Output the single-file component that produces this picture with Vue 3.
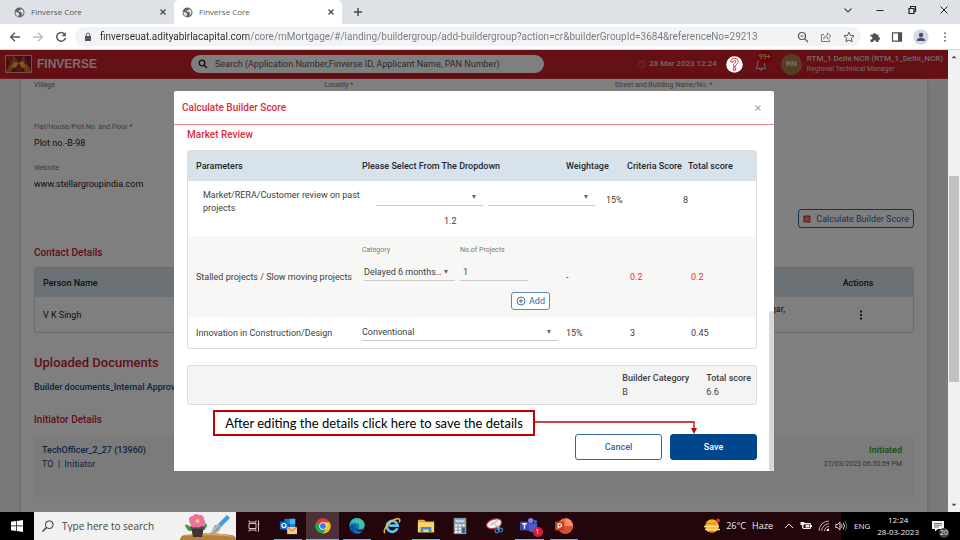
<script setup>
import { ref } from 'vue'

const tabs = [
  { id: 1, title: 'Finverse Core', active: false },
  { id: 2, title: 'Finverse Core', active: true },
]
const url = ref('finverseuat.adityabirlacapital.com/core/mMortgage/#/landing/buildergroup/add-buildergroup?action=cr&builderGroupId=3684&referenceNo=29213')
const search = ref('')
const reviewType = ref('')
const reviewValue = ref('')
const stalledCategory = ref('Delayed 6 months…')
const projectCount = ref('1')
const innovation = ref('Conventional')
const taskQuery = ref('')
</script>

<template>
  <div class="desktop">
    <header class="browser">
      <div class="tabs">
        <div v-for="t in tabs" :key="t.id" class="tab" :class="{ active: t.active }">
          <svg class="globe" viewBox="0 0 12 12"><circle cx="6" cy="6" r="5.4" fill="#5f6368" /><path d="M1.600 5.300 4.600 6.300 5.800 7.600 5 8.800V10.600C2.800 10.200 1.400 8.200 1.600 5.300zM7.500 1.800 7.200 3.200 5.200 3.700 5 5.200 7.600 5.300 8.700 6.800 8.300 9.500C10.400 8 11 5.600 9.800 3.500z" fill="#e4e6ea" /></svg>
          <span class="tab-title">{{ t.title }}</span>
          <button class="plain" aria-label="Close tab"><svg class="x8" viewBox="0 0 8 8"><path d="M1.500 1.500l5 5M6.500 1.500l-5 5" stroke="#45494d" stroke-width="1.300" /></svg></button>
        </div>
        <button class="plain new-tab" aria-label="New tab"><svg class="x10" viewBox="0 0 10 10"><path d="M5 1v8M1 5h8" stroke="#45494d" stroke-width="1.400" /></svg></button>
        <div class="win">
          <button class="plain" aria-label="Search tabs"><svg class="x10" viewBox="0 0 10 10"><path d="M1.500 3.500 5 7l3.500-3.500" fill="none" stroke="#44484c" stroke-width="1.100" /></svg></button>
          <button class="plain" aria-label="Minimize"><svg class="x10" viewBox="0 0 10 10"><path d="M1.500 5.500h7" stroke="#222" stroke-width="1" /></svg></button>
          <button class="plain" aria-label="Restore"><svg class="x10" viewBox="0 0 10 10"><path d="M2 3.500h5v5H2zM3.500 3.500v-2h5v5H7" fill="none" stroke="#222" stroke-width="1.200" /></svg></button>
          <button class="plain" aria-label="Close"><svg class="x10" viewBox="0 0 10 10"><path d="M1.500 1.500l7 7M8.500 1.500l-7 7" stroke="#222" stroke-width="1" /></svg></button>
        </div>
      </div>
      <div class="toolbar">
        <button class="plain" aria-label="Back"><svg class="x12" viewBox="0 0 12 12"><path d="M11 6H2M6 1.700 1.700 6 6 10.300" fill="none" stroke="#54585c" stroke-width="1.400" /></svg></button>
        <button class="plain" aria-label="Forward"><svg class="x12" viewBox="0 0 12 12"><path d="M1 6h9M6 1.700 10.300 6 6 10.300" fill="none" stroke="#b9bbbe" stroke-width="1.400" /></svg></button>
        <button class="plain" aria-label="Reload"><svg class="x12" viewBox="0 0 12 12"><path d="M9.800 3.300A4.400 4.400 0 1 0 10.400 7" fill="none" stroke="#54585c" stroke-width="1.500" /><path d="M10.900.9v4.300H6.600z" fill="#54585c" /></svg></button>
        <div class="omnibox">
          <svg class="lock" viewBox="0 0 8 10"><path d="M1 4h6v5H1z" fill="#54585c" /><path d="M2.300 4V2.700a1.700 1.700 0 0 1 3.400 0V4" fill="none" stroke="#54585c" stroke-width="1" /></svg>
          <input v-model="url" class="url" aria-label="Address" />
          <button class="plain" aria-label="Zoom"><svg class="x12" viewBox="0 0 12 12"><circle cx="5" cy="5" r="3.500" fill="none" stroke="#54585c" stroke-width="1.200" /><path d="M3.500 5h3M7.700 7.700l3.300 3.300" stroke="#54585c" stroke-width="1.200" /></svg></button>
          <button class="plain" aria-label="Share"><svg class="x12" viewBox="0 0 12 12"><path d="M4 3.500H1.500v7h8V8.500" fill="none" stroke="#777b80" /><path d="M3.500 8C4 5.500 5.500 4.300 7.500 4.200V2l3.500 3-3.500 3V6.200C6 6.200 4.700 6.700 3.500 8z" fill="none" stroke="#777b80" stroke-width=".9" /></svg></button>
          <button class="plain" aria-label="Bookmark"><svg class="x12" viewBox="0 0 12 12"><path d="M6 1.200l1.500 3.200 3.500.4-2.600 2.400.7 3.500L6 9l-3.100 1.700.7-3.500L1 4.800l3.500-.4z" fill="none" stroke="#54585c" stroke-width="1" /></svg></button>
        </div>
        <div class="tools">
          <button class="plain" aria-label="Extensions"><svg class="x12" viewBox="0 0 12 12"><path d="M1.500 3.500H4a1.500 1.500 0 1 1 3 0h2.500V6a1.500 1.500 0 1 1 0 3v2H7a1.400 1.400 0 1 0-2.700 0H1.500V8.300a1.400 1.400 0 1 0 0-2.600z" fill="#4c5156" /></svg></button>
          <button class="plain" aria-label="Side panel"><svg class="x12" viewBox="0 0 12 12"><path d="M1.500 1.800h9v8.400h-9z" fill="none" stroke="#4c5156" stroke-width="1.200" /><path d="M7 1.800h3.500v8.400H7z" fill="#4c5156" /></svg></button>
          <button class="plain" aria-label="Profile"><svg class="x16" viewBox="0 0 16 16"><circle cx="8" cy="8" r="7.700" fill="#d5dae2" /><circle cx="8" cy="6" r="2.200" fill="#44546a" /><path d="M3.700 12c0-2.500 2-3.300 4.300-3.300s4.300.8 4.300 3.300z" fill="#44546a" /></svg></button>
          <button class="plain" aria-label="Menu"><svg class="x12" viewBox="0 0 12 12"><path d="M5.200 1.500h1.600v1.600H5.200zM5.200 5.200h1.600v1.600H5.200zM5.200 8.900h1.600v1.600H5.200z" fill="#54585c" /></svg></button>
        </div>
      </div>
    </header>

    <div class="stage">
      <div class="page">
        <div class="appbar">
          <svg class="logo" viewBox="0 0 27 18"><path d="M0 0h27v18H0z" fill="#8e1c24" /><path d="M0 0h9L5 9z" fill="#a83028" /><path d="M27 0h-8l3 9z" fill="#7c1622" /><path d="M9 0 14 8 5 9z" fill="#c8502c" /><path d="M19 0 14 8 22 9z" fill="#c04430" /><path d="M0 18 5 9 9 10 6 18z" fill="#c8642c" /><path d="M27 18 22 9 18 10 20 18z" fill="#d8702c" /><path d="M14 8l5 5-5 5-5-5z" fill="#a82c28" /><path d="M14 8 18 6 21 12 17 13zM9 7l5 1-4 5-4-1z" fill="#f0b848" /><path d="M.5.5h26v17H.5z" fill="none" stroke="#d8a890" /></svg>
          <span class="brand">FINVERSE</span>
          <div class="search">
            <svg class="x10" viewBox="0 0 10 10"><circle cx="4" cy="4" r="2.800" fill="none" stroke="#222" stroke-width="1.300" /><path d="M6 6l3 3" stroke="#222" stroke-width="1.500" /></svg>
            <input v-model="search" aria-label="Search" placeholder="Search (Application Number,Finverse ID, Applicant Name, PAN Number)" />
          </div>
          <div class="bar-right">
            <svg class="cal" viewBox="0 0 8 8"><path d="M1 1.500h6v5.800H1zM1 3h6M2.500.5v1M5.500.5v1" fill="none" stroke="#ee6060" stroke-width=".7" /></svg>
            <span class="stamp">28 Mar 2023 12:24</span>
          </div>
          <div class="help-space"></div>
          <button class="plain bell" aria-label="Notifications">
            <svg class="bell-icon" viewBox="0 0 14 16"><path d="M1 12.500h12c-2-1.500-1.800-3.500-2-6C10.800 4 9.500 2.500 7 2.500S3.200 4 3 6.500c-.2 2.500 0 4.500-2 6zM5 13c.4 2 3.600 2 4 0M7 2.500V1" fill="none" stroke="#f0d8d8" stroke-width="1.100" /></svg>
            <span class="count">99+</span>
          </button>
          <span class="avatar">RN</span>
          <div class="user"><b>RTM_1 Delhi NCR (RTM_1_Delhi_NCR)</b><span>Regional Technical Manager</span></div>
        </div>

        <main class="sheet">
          <div class="facts">
            <span class="label">Village</span>
            <span class="label">Locality *</span>
            <span class="label">Street and Building Name/No. *</span>
          </div>
          <div class="fact"><span class="label">Flat/House/Plot No. and Floor <i>*</i></span><span class="value">Plot no.-B-98</span></div>
          <div class="fact"><span class="label">Website</span><span class="value">www.stellargroupindia.com</span></div>
          <div class="calc-row">
            <button class="calc"><svg class="x8" viewBox="0 0 8 8"><rect x=".5" y=".5" width="7" height="7" rx="1" fill="#d8232f" /><path d="M4 1v6M1 4h6M1.800 2.500h1.500M5 2.500h1.500M5 5.500h1.500M2.500 5v1.500" stroke="#fff" stroke-width=".6" /></svg>Calculate Builder Score</button>
          </div>
          <h2>Contact Details</h2>
          <table class="contacts">
            <thead><tr><th>Person Name</th><th></th><th class="act">Actions</th></tr></thead>
            <tbody><tr><td>V K Singh</td><td class="addr">Nagar,</td><td class="act"><button class="plain" aria-label="Row actions"><svg class="x12" viewBox="0 0 12 12"><path d="M5 1.500h2v2H5zM5 5h2v2H5zM5 8.500h2v2H5z" fill="#0a3c78" /></svg></button></td></tr></tbody>
          </table>
          <h1>Uploaded Documents</h1>
          <a class="doc" href="#documents">Builder documents_Internal Approval</a>
          <h2 class="initiator-title">Initiator Details</h2>
          <section class="initiator">
            <div class="who"><b>TechOfficer_2_27 (13960)</b><span>TO &nbsp;|&nbsp; Initiator</span></div>
            <div class="when"><b>Initiated</b><span>27/03/2023 06:30:59 PM</span></div>
          </section>
        </main>

        <div class="overlay"></div>
        <button class="plain help" aria-label="Help"><svg viewBox="0 0 17 17"><circle cx="8.500" cy="8.500" r="8.300" fill="#fff" /><path d="M4.800 6C4.800 3.600 6.400 2.300 8.500 2.300s3.700 1.300 3.700 3.400c0 1.600-1 2.300-1.900 2.900-.7.500-.7.900-.7 1.700H7.400c0-1.700.3-2.400 1.300-3.100.8-.5 1.100-.8 1.100-1.500s-.5-1.200-1.300-1.200S7.100 5.100 7.100 6zM7.300 11.800h2.400v2.400H7.300z" fill="none" stroke="#d8232f" stroke-width=".9" /></svg></button>

        <div class="modal" role="dialog" aria-labelledby="score-title">
          <div class="modal-head">
            <h3 id="score-title">Calculate Builder Score</h3>
            <button class="plain" aria-label="Close dialog"><svg class="x8" viewBox="0 0 8 8"><path d="M1.500 1.500l5 5M6.500 1.500l-5 5" stroke="#aaa" stroke-width="1.100" /></svg></button>
          </div>
          <div class="modal-body">
            <h3>Market Review</h3>
            <div class="frame">
              <table class="score">
                <colgroup><col class="c1" /><col class="c2" /><col class="c3" /><col class="c3" /><col /></colgroup>
                <thead>
                  <tr><th>Parameters</th><th>Please Select From The Dropdown</th><th>Weightage</th><th>Criteria Score</th><th>Total score</th></tr>
                </thead>
                <tbody>
                  <tr class="review">
                    <td class="inset">Market/RERA/Customer review on past<br />projects</td>
                    <td colspan="4" class="review-cell">
                      <div class="review-line">
                        <div class="pick"><select v-model="reviewType" aria-label="Review type"><option value=""></option></select></div>
                        <div class="pick"><select v-model="reviewValue" aria-label="Review value"><option value=""></option></select></div>
                        <span class="pct">15%</span><span>8</span>
                      </div>
                      <div class="review-score">1.2</div>
                    </td>
                  </tr>
                  <tr class="stalled">
                    <td>Stalled projects / Slow moving projects</td>
                    <td>
                      <div class="pair">
                        <div class="field"><label for="category">Category</label><div class="pick"><select id="category" v-model="stalledCategory"><option>Delayed 6 months…</option></select></div></div>
                        <div class="field count-field"><label for="projects">No.of Projects</label><input id="projects" v-model="projectCount" /></div>
                      </div>
                      <div class="add-row"><button class="add"><svg class="x10" viewBox="0 0 10 10"><circle cx="5" cy="5" r="4" fill="none" stroke="#2f66a3" stroke-width=".9" /><path d="M5 2.800v4.400M2.800 5h4.400" stroke="#2f66a3" stroke-width=".9" /></svg>Add</button></div>
                    </td>
                    <td>-</td><td class="num bad">0.2</td><td class="num bad">0.2</td>
                  </tr>
                  <tr class="innovation">
                    <td>Innovation in Construction/Design</td>
                    <td><div class="pick"><select v-model="innovation" aria-label="Innovation"><option>Conventional</option></select></div></td>
                    <td>15%</td><td class="num">3</td><td class="num">0.45</td>
                  </tr>
                </tbody>
              </table>
            </div>
            <div class="totals">
              <div><b>Builder Category</b><span>B</span></div>
              <div><b>Total score</b><span>6.6</span></div>
            </div>
            <div class="actions"><button class="cancel">Cancel</button><button class="save">Save</button></div>
          </div>
          <div class="modal-scroll"></div>
          <svg class="pointer" viewBox="0 0 164 16"><path d="M0 3h160v7" fill="none" stroke="#c00000" stroke-width="1.300" /><path d="M157 9h6l-3 6z" fill="#c00000" /></svg>
          <div class="callout">After editing the details click here to save the details</div>
        </div>
      </div>
      <div class="scroll">
        <svg class="x8" viewBox="0 0 8 8"><path d="M1.500 5.200h5L4 2.800z" fill="#505050" /></svg>
        <div class="track"><div class="thumb"></div></div>
        <svg class="x8" viewBox="0 0 8 8"><path d="M1.500 2.800h5L4 5.200z" fill="#505050" /></svg>
      </div>
    </div>

    <footer class="taskbar">
      <button class="plain start" aria-label="Start"><svg class="x12" viewBox="0 0 12 12"><path d="M0 1.700 5.200 1v4.600H0zM5.900.9 12 0v5.600H5.900zM0 6.300h5.200V11L0 10.300zM5.900 6.300H12V12l-6.100-.9z" fill="#fff" /></svg></button>
      <div class="task-search">
        <svg class="x12" viewBox="0 0 12 12"><circle cx="7.300" cy="4.700" r="3.900" fill="none" stroke="#333" /><path d="M4.500 7.500.5 11.500" stroke="#333" stroke-width="1.200" /></svg>
        <input v-model="taskQuery" aria-label="Search Windows" placeholder="Type here to search" />
        <svg class="garden" viewBox="0 0 56 26"><path d="M0 26c0-5 5-6 10-5 10-2 30-2 40 0 4 0 6 2 6 5z" fill="#b5803f" /><path d="M2 22c14-4 38-4 52 1-14-2-36-2-52-1z" fill="#d9a45c" /><path d="M12 14C4 8 4 11 7 15s5 2 6 0zM21 14c6-8 7-3 5 0s-4 2-5 0z" fill="#3d9c35" /><path d="M11 13h13l-2 10h-9z" fill="#3c3334" /><path d="M10.500 12h14v3h-14z" fill="#57494b" /><g fill="#ef6f9f"><circle cx="13" cy="6" r="4" /><circle cx="20" cy="5" r="4" /><circle cx="16" cy="3" r="3" /><circle cx="22" cy="9" r="3.500" /><circle cx="14" cy="10" r="3.500" /><circle cx="18" cy="10.500" r="3" /></g><circle cx="17.500" cy="7" r="2" fill="#fbd160" /><path d="M47 1l3 3-9 9-3-3z" fill="#38a0e0" /><path d="M40 10l-5 1-5 9c5 0 9-2 11-7z" fill="#93a2ac" /><path d="M38 11l-7 8" stroke="#d5dee4" /></svg>
      </div>
      <button class="plain view" aria-label="Task view"><svg class="x12" viewBox="0 0 12 12"><path d="M1 3.500h7v5H1zM1 .5V2h7V.5M1 11.500V10h7v1.500M10.500.5v11M9.700 4h1.800" fill="none" stroke="#e6dcdc" stroke-width=".9" /></svg></button>
      <div class="apps">
        <button class="plain app on" aria-label="Outlook"><svg viewBox="0 0 20 20"><path d="M6 2h12v12H6z" fill="#1a78c8" /><path d="M12 2h6v6h-6z" fill="#4ab4f0" /><path d="M6 8h6v6H6z" fill="#0d58a0" /><rect x="1" y="5" width="9" height="9" rx="1" fill="#0c6cc4" /><circle cx="5.500" cy="9.500" r="2.300" fill="none" stroke="#fff" stroke-width="1.300" /><path d="M9 11h11v8H9z" fill="#f6c884" /><path d="M9 11l5.500 4.500L20 11" fill="none" stroke="#a8703c" /></svg></button>
        <button class="plain app on current" aria-label="Chrome"><svg viewBox="0 0 20 20"><path d="M10 10 2.600 5.700a8.500 8.500 0 0 1 14.800 0z" fill="#e33b2e" /><path d="M2.600 5.700A8.500 8.500 0 0 0 10 18.500l4-7.500z" fill="#2ca14c" /><path d="M17.400 5.700A8.500 8.500 0 0 1 10 18.500l4.200-7.500-4.200-5.300z" fill="#fbc116" /><circle cx="10" cy="10" r="4.200" fill="#fff" /><circle cx="10" cy="10" r="3.300" fill="#3b7ded" /></svg></button>
        <button class="plain app on" aria-label="Edge"><svg viewBox="0 0 20 20"><circle cx="10" cy="10" r="8.500" fill="#1478c8" /><path d="M1.600 9C3 3 7 1.500 10 1.500c5 0 8.500 3.500 8.500 7 0 3-2.500 4.500-4.500 4.500-3 0-1.500-1.500-1.500-3C12.500 7.500 10 6.500 7.500 6.500 5 6.500 2.800 7.300 1.600 9z" fill="#3fc4a0" /><path d="M1.600 9C3 3 7 1.500 10 1.500c2 0 3.500.5 4.500 1C9 3 4 4 1.600 9z" fill="#30b0e0" /><path d="M7 9c-3 4 1 9.500 6.500 9-4 2-10.500-.5-11-6C3 9 5 8.500 7 9z" fill="#0c4c98" /><path d="M8.500 9c-2 4 2 7 8.500 5l-.8 1.500C12 17 7 15 7.500 10z" fill="#22060b" /></svg></button>
        <button class="plain app" aria-label="Internet Explorer"><svg viewBox="0 0 20 20"><path d="M16 12.500a6 6 0 1 1 .3-3H6.500" fill="none" stroke="#5cc4f4" stroke-width="3" /><path d="M2 18C-1 14 10 1 18 2c1 .3 1 2 0 4" fill="none" stroke="#f6c63a" stroke-width="1.500" /></svg></button>
        <button class="plain app on" aria-label="File Explorer"><svg viewBox="0 0 20 20"><path d="M1 3h7l1.500 2H19v12H1z" fill="#e8a92e" /><path d="M1 6h18v11H1z" fill="#fcd768" /><path d="M4 11h12v6h-3v-3H7v3H4z" fill="#3c8ed8" /></svg></button>
        <button class="plain app" aria-label="Calculator"><svg viewBox="0 0 20 20"><path d="M3 1h14v18H3z" fill="#8d979d" /><path d="M5 3h10v3H5z" fill="#a4dcf4" /><path d="M4.500 8h2.800v2.500H4.500zM8.500 8h2.800v2.500H8.500zM12.500 8h2.800v2.500h-2.800zM4.500 11.700h2.800v2.500H4.500zM8.500 11.700h2.800v2.500H8.500zM4.500 15.400h2.800v2.300H4.500zM8.500 15.400h2.800v2.300H8.500z" fill="#eef1f3" /><path d="M12.500 11.700h2.800v6h-2.800z" fill="#1c5c94" /></svg></button>
        <button class="plain app" aria-label="Snipping Tool"><svg viewBox="0 0 20 20"><ellipse cx="9" cy="7.500" rx="8.500" ry="5" transform="rotate(-18 9 7.500)" fill="#f5eeee" stroke="#c24444" stroke-width="1.200" /><path d="M5 9l8-5" stroke="#999" /><path d="M10 8l5 6M16 8l-3 6" stroke="#b4bcc4" stroke-width="1.200" /><circle cx="12" cy="15.500" r="2" fill="none" stroke="#2e86c8" stroke-width="1.400" /><circle cx="16.500" cy="14.500" r="2" fill="none" stroke="#2e86c8" stroke-width="1.400" /></svg></button>
        <button class="plain app on" aria-label="Teams"><svg viewBox="0 0 20 20"><circle cx="12" cy="4" r="3" fill="#7b83eb" /><circle cx="17" cy="5" r="2" fill="#5059c9" /><path d="M8 7h11v6c0 3-2 4-4 4-4 0-7-2-7-5z" fill="#5059c9" /><rect x="0" y="5" width="10" height="10" rx="1" fill="#4048b0" /><path d="M2.500 7.500h5M5 7.500v5.500" stroke="#fff" stroke-width="1.400" /></svg><span class="badge">1</span></button>
        <button class="plain app on" aria-label="PowerPoint"><svg viewBox="0 0 20 20"><circle cx="11.500" cy="10" r="8.500" fill="#ed6c47" /><path d="M11.500 1.500A8.500 8.500 0 0 1 20 10h-8.500z" fill="#ff8f6b" /><path d="M11.500 10H20a8.500 8.500 0 0 1-15 5.500z" fill="#d35230" /><rect x="0" y="5" width="10" height="10" rx="1" fill="#c43e1c" /><path d="M3.500 13V7.500h2a1.600 1.600 0 0 1 0 3.500h-2" fill="none" stroke="#fff" stroke-width="1.300" /></svg></button>
      </div>
      <div class="weather">
        <svg class="x16" viewBox="0 0 16 16"><circle cx="8" cy="8" r="6.800" fill="#f8b02c" /><path d="M0 8.500h15M1 11.500h15" stroke="#ffdf8c" stroke-width="1.400" /><path d="M2 5.500h10M3 13.500h9" stroke="#e87f1c" stroke-width="1" /><circle cx="14" cy="2.500" r="2" fill="#e02c2c" /></svg>
        <span>26°C</span><span>Haze</span>
      </div>
      <div class="tray">
        <svg class="x10" viewBox="0 0 10 10"><path d="M1 7l4-4 4 4" fill="none" stroke="#eee" /></svg>
        <svg class="x12" viewBox="0 0 12 12"><path d="M3 3.500h7.500v5H3zM11.500 5v2" fill="none" stroke="#eee" /><path d="M5.500 4.500h4v3h-4zM.5 2h4v3h-1.500v3h-1V5H.5z" fill="#eee" /></svg>
        <svg class="x12" viewBox="0 0 12 12"><path d="M1 11A10 10 0 0 1 11 1M3.800 11A7 7 0 0 1 11 3.800M6.500 11A4.500 4.500 0 0 1 11 6.500" fill="none" stroke="#b8b0b0" /><path d="M8.500 11A2.500 2.500 0 0 1 11 8.500V11z" fill="#fff" /></svg>
      </div>
      <div class="clock">
        <svg class="x12" viewBox="0 0 12 12"><path d="M.8 4.500h1.700L5 2v8L2.500 7.500H.8zM6.500 4.200a3 3 0 0 1 0 3.600M8.200 2.800a5 5 0 0 1 0 6.400" fill="none" stroke="#eee" stroke-width=".9" /><path d="M10 1.500a7 7 0 0 1 0 9" fill="none" stroke="#888" stroke-width=".8" /></svg>
        <span>ENG</span>
        <div class="time"><span>12:24</span><span>28-03-2023</span></div>
        <button class="plain note" aria-label="Notifications"><svg class="x12" viewBox="0 0 12 12"><path d="M0 1h12v8H6l-3 2.500V9H0z" fill="#f4f4f4" /><path d="M2 3.500h8M2 5.200h8M2 7h5" stroke="#555" stroke-width=".8" /></svg><span class="note-count">20</span></button>
      </div>
    </footer>
  </div>
</template>

<style>
body { margin: 0; }
</style>

<style scoped>
* { box-sizing: border-box; }
.desktop { display: flex; flex-direction: column; height: 100vh; overflow: hidden; font-family: Roboto, "Liberation Sans", sans-serif; font-size: 9px; line-height: 12px; color: #3c4043; }
button, input, select { font: inherit; color: inherit; }
.plain { display: grid; place-items: center; padding: 0; border: 0; background: none; }
svg { display: block; flex: none; }
h1, h2, h3 { margin: 0; }
.x8 { width: 8px; height: 8px; }
.x10 { width: 10px; height: 10px; }
.x12 { width: 12px; height: 12px; }
.x16 { width: 16px; height: 16px; }

/* Browser frame */
.browser { flex: none; font-family: "Open Sans", "Noto Sans", sans-serif; background: #fff; border-bottom: 1px solid #d4d6d9; }
.tabs { display: flex; align-items: center; height: 24px; background: #dee1e6; }
.tab { display: flex; align-items: center; width: 174px; height: 24px; padding: 0 7px 0 14px; gap: 6px; font-size: 8px; color: #55595d; }
.tab.active { width: 168px; padding-left: 8px; background: #fff; border-radius: 5px 5px 0 0; }
.tab-title { flex: 1; }
.globe { width: 11px; height: 11px; }
.new-tab { margin-left: 11px; }
.win { display: flex; gap: 22px; margin-left: auto; padding: 0 11px 4px 0; }
.toolbar { display: flex; align-items: center; height: 25px; padding: 0 9px; gap: 11px; }
.omnibox { flex: 1; display: flex; align-items: center; gap: 11px; height: 19px; margin: 0 -3px 0 -3px; padding: 0 6px 0 9px; border-radius: 10px; background: #f1f3f4; }
.lock { width: 8px; height: 10px; margin-right: -3px; }
.url { flex: 1; min-width: 0; padding: 0; border: 0; outline: 0; font-family: Roboto, sans-serif; font-size: 10px; color: transparent; background: linear-gradient(90deg, #2a2d30 149px, #75797e 149px); -webkit-background-clip: text; background-clip: text; }
.tools { display: flex; align-items: center; gap: 10px; }

/* Application */
.stage { flex: 1; min-height: 0; display: flex; }
.page { position: relative; flex: 1; min-width: 0; overflow: hidden; background: #f4f4f4; }
.appbar { display: flex; align-items: center; height: 29px; padding: 0 5px; background: #c8202a; border-bottom: 1px solid #e03a44; color: #e8d0d0; }
.logo { width: 27px; height: 18px; }
.brand { margin-left: 5px; width: 154px; font-size: 12px; font-weight: 700; font-family: "Liberation Sans", sans-serif; color: #f0dada; }
.search { display: flex; align-items: center; gap: 7px; width: 353px; height: 18px; padding: 0 7px; border-radius: 9px; background: #fff; }
.search input { flex: 1; min-width: 0; padding: 0; border: 0; outline: 0; background: none; }
.search input::placeholder { color: #555; opacity: 1; }
.bar-right { display: flex; align-items: center; gap: 4px; margin-left: auto; font-size: 8px; font-weight: 500; }
.cal { width: 8px; height: 8px; }
.help-space { width: 37px; }
.bell { position: relative; width: 14px; height: 18px; }
.bell-icon { width: 12px; height: 15px; }
.count { position: absolute; left: 4px; top: -4px; padding: 0 1px; border-radius: 6px; background: #e00000; font-size: 7px; font-weight: 500; line-height: 12px; }
.avatar { display: grid; place-items: center; width: 21px; height: 21px; margin: 0 5px 0 13px; border-radius: 50%; background: #a87c48; font-size: 8px; font-weight: 500; color: #eee; }
.user { display: flex; flex-direction: column; line-height: 10px; }
.user b { font-size: 8px; font-weight: 500; }
.user span { font-size: 7px; }

.sheet { margin: 0 21px; height: 100%; padding: 0 13px; background: #fff; box-shadow: 0 0 4px rgba(0, 0, 0, .25); }
.facts { display: grid; grid-template-columns: 33% 33% 34%; height: 42px; }
.label { font-size: 7px; line-height: 13px; color: #777; }
.label i { color: #d8232f; }
.fact { display: flex; flex-direction: column; height: 41px; }
.value { line-height: 19px; color: #222; }
.calc-row { display: flex; justify-content: flex-end; height: 43px; padding-top: 6px; }
.calc { display: flex; align-items: center; gap: 5px; height: 19px; padding: 0 4px; border: 1px solid #2f66a3; border-radius: 3px; background: none; color: #2f66a3; white-space: nowrap; }
h2 { font-size: 10px; font-weight: 500; line-height: 14px; color: #c8202a; }
.contacts { width: 100%; margin-top: 7px; border: 1px solid #d8d8d8; border-radius: 3px; border-spacing: 0; color: #222; }
.contacts th { height: 29px; padding: 0 8px; background: #d8e2ec; text-align: left; font-weight: 500; }
.contacts td { height: 35px; padding: 0 8px; }
.contacts .addr { padding: 0 0 12px; text-align: right; }
.contacts .act { width: 128px; text-align: center; padding: 0 0 0 18px; }
.contacts td.act { padding-left: 24px; }
.act .plain { margin: 0 auto; }
h1 { margin-top: 21px; font-size: 13px; font-weight: 500; line-height: 18px; color: #c8202a; }
.doc { display: block; margin-top: 9px; font-weight: 500; color: #0a4c94; text-decoration: none; }
.initiator-title { margin-top: 20px; }
.initiator { display: flex; justify-content: space-between; height: 61px; margin-top: 9px; padding: 7px 12px 7px 8px; background: #f6f6f6; line-height: 14px; color: #1c4c84; }
.who, .when { display: flex; flex-direction: column; }
.when { align-items: flex-end; color: #666; }
.when b { color: #28a020; }
.who b, .when b { font-weight: 500; }
.when span { font-size: 7px; }
.overlay { position: absolute; inset: 0; background: rgba(0, 0, 0, .5); }
.help { position: absolute; right: 205px; top: 6px; width: 17px; height: 17px; }
.help svg { width: 17px; height: 17px; }

/* Dialog */
.modal { position: absolute; left: 50%; top: 41px; width: 600px; margin-left: -300px; background: #fff; border-radius: 2px 2px 0 0; }
.modal-head { display: flex; align-items: center; justify-content: space-between; height: 34px; padding: 0 12px 0 8px; border-bottom: 1px solid #f08488; }
h3 { font-size: 10px; font-weight: 500; line-height: 14px; color: #d8303a; }
.modal-body { padding: 3px 17px 11px 13px; }
.frame { margin-top: 8px; border: 1px solid #dcdcdc; border-radius: 3px; overflow: hidden; }
.score { width: 100%; table-layout: fixed; border-spacing: 0; }
.c1 { width: 166px; }
.c2 { width: 204px; }
.c3 { width: 61px; }
.score th { height: 30px; padding: 0 0 0 8px; background: #d8e2ec; text-align: left; font-weight: 500; color: #24282c; white-space: nowrap; }
.score td { padding: 0 0 0 8px; }
.score .inset { padding: 8px 0 0 15px; vertical-align: top; line-height: 13px; white-space: nowrap; }
.review td { height: 55px; }
.score .review-cell { padding: 9px 0 0 22px; vertical-align: top; }
.review-line { display: flex; align-items: flex-end; gap: 5px; }
.review-line .pick { width: 107px; }
.pct { width: 72px; margin-left: 6px; }
.review-score { padding: 9px 0 0 68px; }
.pick { position: relative; }
.pick::after { content: ""; position: absolute; right: 7px; top: 5px; border: 2px solid transparent; border-top: 4px solid #666; border-bottom: 0; pointer-events: none; }
select, .field input { display: block; width: 100%; height: 16px; padding: 0 12px 2px 0; border: 0; border-bottom: 1px solid #ccc; border-radius: 0; outline: 0; background: none; appearance: none; text-overflow: ellipsis; }
.stalled { background: #f7f7f5; }
.stalled td { height: 82px; }
.pair { display: flex; gap: 5px; }
.field { width: 93px; }
.field .pick { margin-left: 2px; }
.count-field { width: 68px; }
.field label { display: block; padding-bottom: 9px; font-size: 7px; color: #777; }
.field input { padding-left: 3px; }
.add-row { display: flex; justify-content: flex-end; padding: 11px 8px 0 0; }
.add { display: flex; align-items: center; gap: 3px; height: 18px; padding: 0 4px; border: 1px solid #5a88b8; border-radius: 3px; background: #fff; color: #2f66a3; }
.innovation td { height: 30px; }
.score .num { padding-left: 11px; }
.bad { color: #f22c2c; }
.totals { display: flex; justify-content: flex-end; gap: 17px; margin-top: 16px; padding: 5px; border: 1px solid #dcdcdc; border-radius: 3px; background: #f4f4f4; line-height: 14px; }
.totals div { display: flex; flex-direction: column; }
.totals b { font-weight: 500; }
.actions { display: flex; justify-content: flex-end; gap: 8px; padding-top: 29px; }
.actions button { width: 87px; height: 26px; border: 1px solid #2f66a3; border-radius: 3px; background: #fff; font-weight: 500; color: #2f66a3; }
.actions .save { background: #00468c; border-color: #00468c; color: #fff; }
.modal-scroll { position: absolute; right: 0; bottom: 0; width: 5px; height: 160px; border-radius: 2px; background: #d8d8d8; }
.callout { position: absolute; left: 39px; bottom: 35px; width: 322px; height: 26px; border: 2px solid #c00000; background: #fff; font-family: Lato, sans-serif; font-size: 13px; line-height: 22px; text-align: center; color: #000; white-space: nowrap; }
.pointer { position: absolute; left: 360px; bottom: 36px; width: 164px; height: 16px; }

.scroll { display: flex; flex-direction: column; align-items: center; width: 12px; padding: 3px 0; background: #f1f1f1; }
.track { flex: 1; width: 10px; padding-top: 115px; }
.thumb { height: 206px; background: #c1c1c1; }

/* Taskbar */
.taskbar { flex: none; display: flex; align-items: stretch; height: 28px; background: #22060b; color: #eee; font-family: "Open Sans", "Noto Sans", sans-serif; font-size: 9px; }
.start { width: 34px; background: #000; }
.task-search { display: flex; align-items: center; gap: 8px; width: 202px; padding-left: 8px; background: #f1f1f1; color: #444; }
.task-search input { flex: 1; min-width: 0; padding: 0; border: 0; outline: 0; background: none; font-size: 10px; }
.task-search input::placeholder { color: #444; opacity: 1; }
.garden { width: 56px; height: 26px; align-self: flex-end; }
.view { width: 35px; }
.apps { display: grid; grid-template-columns: repeat(9, 1fr); width: 310px; }
.app { position: relative; }
.app svg { width: 18px; height: 18px; }
.app.on { border-bottom: 1px solid #76b0e4; margin: 0 3px; }
.app.current { margin: 0 1px; background: #4c3238; }
.badge { position: absolute; right: 1px; bottom: 2px; width: 10px; height: 10px; border-radius: 50%; background: #d81c3c; font-size: 7px; line-height: 10px; color: #fff; }
.weather { display: flex; align-items: center; gap: 6px; margin-left: auto; }
.tray { display: flex; align-items: center; gap: 6px; margin: 0 5px 0 11px; }
.clock { display: flex; align-items: center; gap: 7px; padding-right: 13px; background: linear-gradient(90deg, #22060b 6px, #000 6px); font-size: 8px; }
.time { display: flex; flex-direction: column; align-items: center; line-height: 12px; }
.note { position: relative; width: 18px; height: 20px; margin-left: 3px; }
.note-count { position: absolute; right: -2px; bottom: -2px; padding: 0 1px; border-radius: 6px; background: #444; font-size: 7px; line-height: 10px; }
</style>
